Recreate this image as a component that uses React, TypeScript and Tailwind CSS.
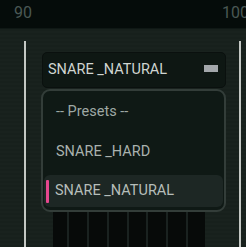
export default function App() {
  const cols = [16, 20, 20, 20, 19, 20, 20, 17];
  return (
    <div
      className="w-[246px] h-[247px] overflow-hidden bg-[#17201c] flex flex-col"
      style={{ fontFamily: "Roboto, 'Liberation Sans', sans-serif" }}
    >
      <div className="h-[29px] shrink-0 bg-[#050c0a] border-b border-[#0f1815] flex items-start pt-[3px] text-[16px] text-[#4a5854] leading-[20px]">
        <span className="ml-[14px]">90</span>
        <span className="ml-auto mr-[-3px]">100</span>
      </div>
      <div className="flex-1 flex bg-[repeating-linear-gradient(0deg,#17201c_0px,#17201c_2px,#19221e_2px,#19221e_4px)]">
        <div className="w-[24px] shrink-0" />
        <div className="w-[2px] shrink-0 mt-[12px] bg-[#c4c8c4]" />
        <div className="flex-1 flex flex-col pl-[16px] pt-[23px]">
          <div className="w-[184px] h-[36px] shrink-0 rounded-[5px] bg-[#0e1713] border border-[#0a100e] flex items-center pl-[5px] pr-[7px] text-[14.5px] text-[#d0d5d1]">
            <span>SNARE _NATURAL</span>
            <div className="ml-auto mb-[4px] w-[14px] h-[7px] bg-[#a3a7ab]" />
          </div>
          <div className="w-[185px] ml-[-1px] mt-[1px] shrink-0 rounded-[9px] border-2 border-[#333d39] bg-[#0f1915] px-[1px] pt-[1px] pb-[3px] text-[14.5px] text-[#a9b2ae]">
            <div className="h-[39px] flex items-center pl-[12px] text-[#9ea8a4]">-- Presets --</div>
            <div className="h-[41px] flex items-center pl-[12px]">SNARE _HARD</div>
            <div className="mt-[3px] h-[32px] rounded-[6px] bg-[#1d2724] flex items-center pl-[2px] text-[#b6beba]">
              <div className="w-[3px] h-[23px] rounded-[1px] bg-[#e6478e]" />
              <span className="ml-[6px]">SNARE _NATURAL</span>
            </div>
          </div>
          <div className="ml-[11px] w-[152px] flex-1 flex bg-[#070a09]">
            {cols.map((w, i) => (
              <div
                key={i}
                className={i < cols.length - 1 ? "h-full border-r-2 border-[#1a2220]" : "h-full"}
                style={{ width: w }}
              />
            ))}
          </div>
        </div>
        <div className="w-[2px] shrink-0 mt-[12px] bg-[#c4c8c4]" />
        <div className="w-[5px] shrink-0" />
      </div>
    </div>
  );
}
